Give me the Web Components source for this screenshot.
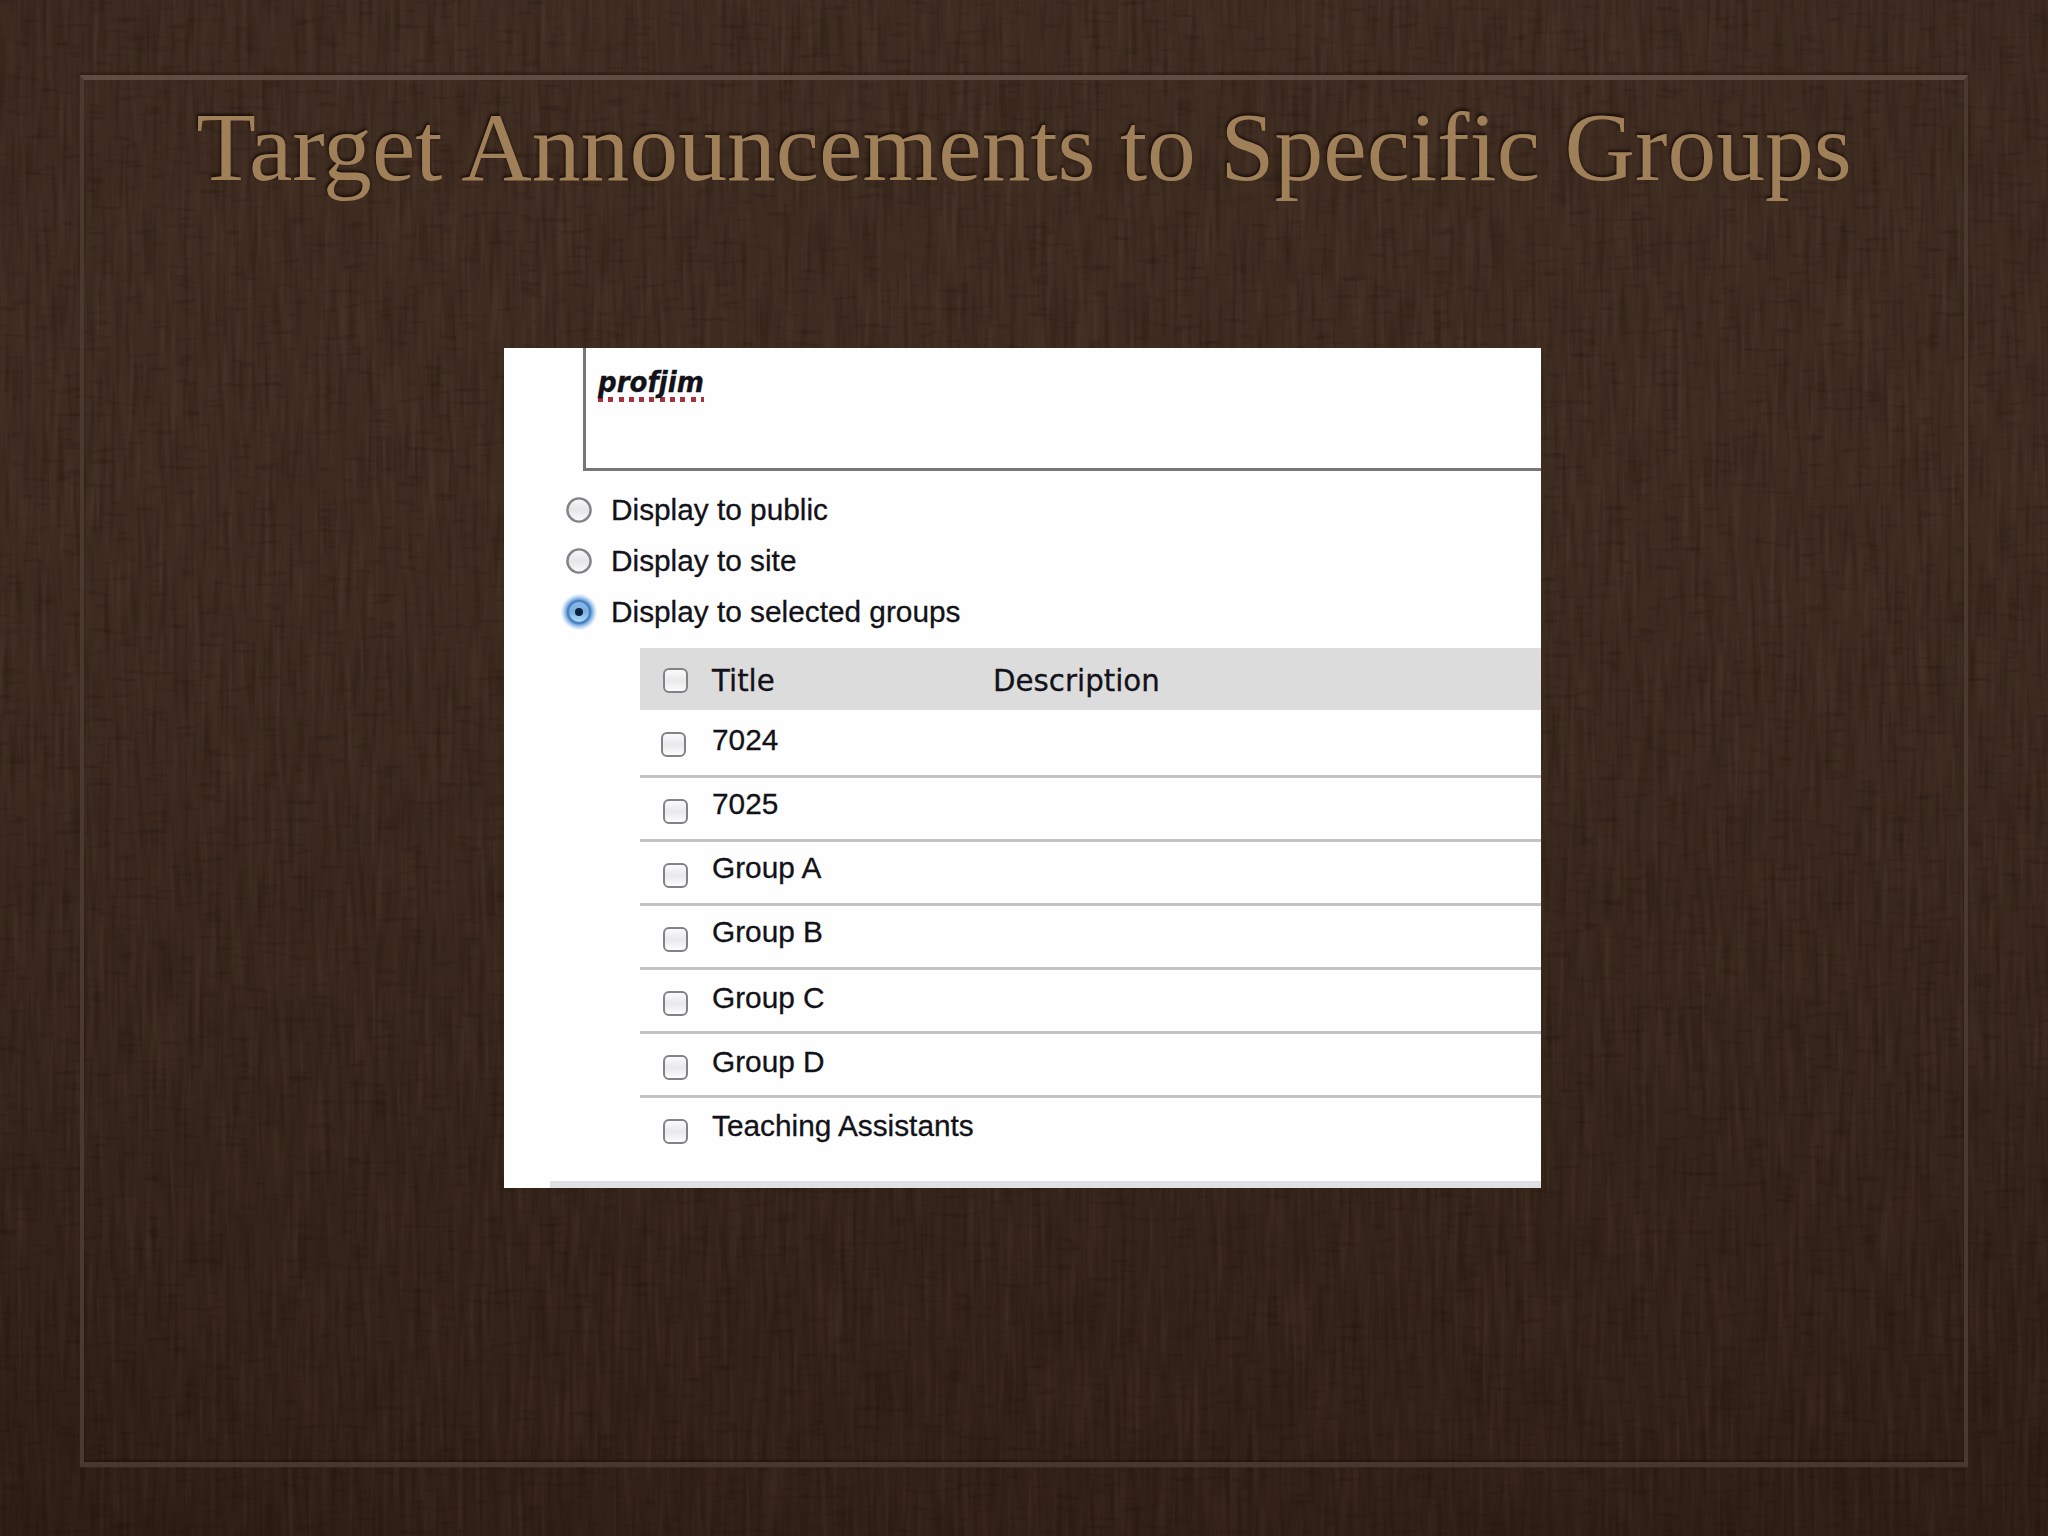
<!DOCTYPE html>
<html lang="en">
<head>
<meta charset="utf-8">
<title>Target Announcements to Specific Groups</title>
<style>
  body { margin: 0; background: #35241b; }
</style>
</head>
<body>

<keynote-slide>
  <span slot="title">Target Announcements to Specific Groups</span>
  <screen-clip>
    <message-box>profjim</message-box>
    <radio-option>Display to public</radio-option>
    <radio-option>Display to site</radio-option>
    <radio-option checked>Display to selected groups</radio-option>
    <group-table></group-table>
    <footer-bar></footer-bar>
  </screen-clip>
</keynote-slide>

<script>
// Shared base: every element is just a static shadow template.
class StaticElement extends HTMLElement {
  connectedCallback() {
    if (this.shadowRoot) return;
    this.attachShadow({ mode: "open" });
    this.shadowRoot.innerHTML = this.template();
  }
}

// Woven cloth behind the slide: vertical threads plus a few cross threads.
class ClothBackdrop extends StaticElement {
  template() {
    return `
      <style>
        :host {
          display: block; overflow: hidden;
          background: linear-gradient(#402d22 0%, #3f2c21 35%, #36251b 72%, #312017 100%);
        }
        svg { display: block; width: 2048px; height: 1536px; }
      </style>
      <svg viewBox="0 0 2048 1536" aria-hidden="true">
        <defs>
          <filter id="light" x="0" y="0" width="100%" height="100%" color-interpolation-filters="sRGB">
            <feTurbulence type="fractalNoise" baseFrequency="0.17 0.011" numOctaves="2" seed="7"/>
            <feColorMatrix values="0 0 0 0 .46  0 0 0 0 .36  0 0 0 0 .28  1.2 0 0 0 -.55"/>
          </filter>
          <filter id="dark" x="0" y="0" width="100%" height="100%" color-interpolation-filters="sRGB">
            <feTurbulence type="fractalNoise" baseFrequency="0.19 0.014" numOctaves="2" seed="23"/>
            <feColorMatrix values="0 0 0 0 .08  0 0 0 0 .04  0 0 0 0 .02  1.5 0 0 0 -.68"/>
          </filter>
          <filter id="cross" x="0" y="0" width="100%" height="100%" color-interpolation-filters="sRGB">
            <feTurbulence type="fractalNoise" baseFrequency="0.035 0.17" numOctaves="2" seed="4"/>
            <feColorMatrix values="0 0 0 0 .08  0 0 0 0 .04  0 0 0 0 .02  2.4 0 0 0 -1.4"/>
          </filter>
          <radialGradient id="edge" cx="50%" cy="48%" r="72%">
            <stop offset=".72" stop-color="#140a04" stop-opacity="0"/>
            <stop offset="1" stop-color="#140a04" stop-opacity=".12"/>
          </radialGradient>
        </defs>
        <rect width="2048" height="1536" filter="url(#light)" opacity=".32"/>
        <rect width="2048" height="1536" filter="url(#dark)" opacity=".42"/>
        <rect width="2048" height="1536" filter="url(#cross)" opacity=".32"/>
        <rect width="2048" height="1536" fill="url(#edge)"/>
      </svg>
    `;
  }
}

class KeynoteSlide extends StaticElement {
  template() {
    return `
      <style>
        :host { display: grid; width: 2048px; height: 1536px; overflow: hidden; }
        cloth-backdrop, .frame { grid-area: 1 / 1; }
        .frame {
          z-index: 1; box-sizing: border-box; margin: 75px 80px 69px 80px;
          border-style: solid; border-width: 5px 4px;
          border-color: #604d42 #4a392f #47372e;
          box-shadow: 0 -2px 2px rgba(20, 8, 2, .4), inset 0 -2px 2px rgba(20, 8, 2, .4),
            0 0 2px rgba(90, 70, 58, .5);
          display: flex; flex-direction: column; align-items: center;
        }
        h1 {
          margin: 11px 0 0; height: 257px;
          font: normal 97.6px/112px "Liberation Serif", serif;
          white-space: nowrap; color: #a08058;
          text-shadow: -1px -2px 3px rgba(15, 6, 2, .8);
        }
        ::slotted(screen-clip) { margin-right: 3px; }
      </style>
      <cloth-backdrop></cloth-backdrop>
      <div class="frame">
        <h1><slot name="title"></slot></h1>
        <slot></slot>
      </div>
    `;
  }
}

class ScreenClip extends StaticElement {
  template() {
    return `
      <style>
        :host {
          display: flex; flex-direction: column; box-sizing: border-box;
          width: 1037px; height: 840px; overflow: hidden; background: #fefefe;
          color: #121218; font: 29.8px/34px "Liberation Sans", Arial, sans-serif;
          -webkit-text-stroke: .3px #121218;
        }
      </style>
      <slot></slot>
    `;
  }
}

class MessageBox extends StaticElement {
  template() {
    return `
      <style>
        :host {
          display: block; box-sizing: border-box; height: 123px;
          margin: 0 0 13px 79px; padding: 16px 0 0 12px;
          border-left: 3px solid #76757a; border-bottom: 3px solid #76757a;
        }
        span {
          display: inline-block; padding-bottom: 2px;
          font: italic bold 29px/36px "DejaVu Sans Condensed", "DejaVu Sans", sans-serif;
          /* spelling marker */
          background: repeating-linear-gradient(90deg, #a8323c 0 5px, transparent 5px 10.3px)
            0 100% / 100% 5px no-repeat;
        }
      </style>
      <span><slot></slot></span>
    `;
  }
}

class RadioOption extends StaticElement {
  template() {
    return `
      <style>
        :host {
          display: flex; align-items: center; gap: 19px;
          height: 51px; padding-left: 62px;
        }
        svg { flex: none; width: 26px; height: 26px; overflow: visible; }
      </style>
      ${this.hasAttribute("checked") ? this.on() : this.off()}
      <span><slot></slot></span>
    `;
  }

  off() {
    return `
      <svg viewBox="0 0 26 26">
        <defs><linearGradient id="g" x2="0" y2="1">
          <stop offset="0" stop-color="#fafafa"/><stop offset=".5" stop-color="#e6e5e7"/>
          <stop offset="1" stop-color="#fdfdfd"/>
        </linearGradient></defs>
        <circle cx="13" cy="13" r="11.6" fill="url(#g)" stroke="#858287" stroke-width="2.4"/>
      </svg>`;
  }

  on() {
    return `
      <svg viewBox="0 0 26 26">
        <defs>
          <radialGradient id="halo">
            <stop offset=".66" stop-color="#5f98d8"/><stop offset="1" stop-color="#9cc3ee" stop-opacity="0"/>
          </radialGradient>
          <linearGradient id="g" x2="0" y2="1">
            <stop offset="0" stop-color="#8db8e6"/><stop offset=".5" stop-color="#7ab0e2"/>
            <stop offset="1" stop-color="#b5e0fa"/>
          </linearGradient>
        </defs>
        <circle cx="13" cy="13" r="18.5" fill="url(#halo)"/>
        <circle cx="13" cy="13" r="11" fill="url(#g)" stroke="#4b7fbd" stroke-width="2"/>
        <circle cx="13" cy="13" r="4" fill="#0d2240"/>
      </svg>`;
  }
}

class CheckBox extends StaticElement {
  template() {
    return `
      <style>
        :host {
          display: block; flex: none; box-sizing: border-box; width: 25px; height: 25px;
          border: 2px solid #858287; border-radius: 6px;
          background: linear-gradient(#fbfbfb, #e9e8ea 50%, #fcfcfc);
        }
      </style>
    `;
  }
}

const GROUPS = [
  "7024", "7025", "Group A", "Group B", "Group C", "Group D", "Teaching Assistants",
];

class GroupTable extends StaticElement {
  template() {
    return `
      <style>
        :host { display: block; margin: 11px 0 0 136px; }
        .row {
          display: grid; grid-template-columns: 72px 1fr; align-items: start;
          box-sizing: border-box; height: 64px; padding-top: 9px;
          border-bottom: 3px solid #c4c3c4;
        }
        check-box { margin: 12px 0 0 23px; }
        .head {
          grid-template-columns: 72px 281px 1fr; height: 62px; padding-top: 16px;
          border: 0; background: #dddcdd;
          font: 29.3px/34px "DejaVu Sans", Verdana, sans-serif;
        }
        .head check-box { margin-top: 4px; }
        .first { height: 68px; padding-top: 13px; }
        .first check-box { margin: 9px 0 0 21px; }
        .low { padding-top: 11px; }
        .low check-box { margin-top: 10px; }
        .row:last-child { border: 0; }
      </style>
      <div class="row head">
        <check-box></check-box><span>Title</span><span>Description</span>
      </div>
      ${GROUPS.map((name, i) => `
        <div class="row ${i === 0 ? "first" : i > 3 ? "low" : ""}">
          <check-box></check-box><span>${name}</span>
        </div>`).join("")}
    `;
  }
}

class FooterBar extends StaticElement {
  template() {
    return `
      <style>
        :host { display: block; height: 7px; margin: auto 0 0 46px; background: #dfe0e3; }
      </style>
    `;
  }
}

customElements.define("cloth-backdrop", ClothBackdrop);
customElements.define("keynote-slide", KeynoteSlide);
customElements.define("screen-clip", ScreenClip);
customElements.define("message-box", MessageBox);
customElements.define("radio-option", RadioOption);
customElements.define("check-box", CheckBox);
customElements.define("group-table", GroupTable);
customElements.define("footer-bar", FooterBar);
</script>
</body>
</html>
